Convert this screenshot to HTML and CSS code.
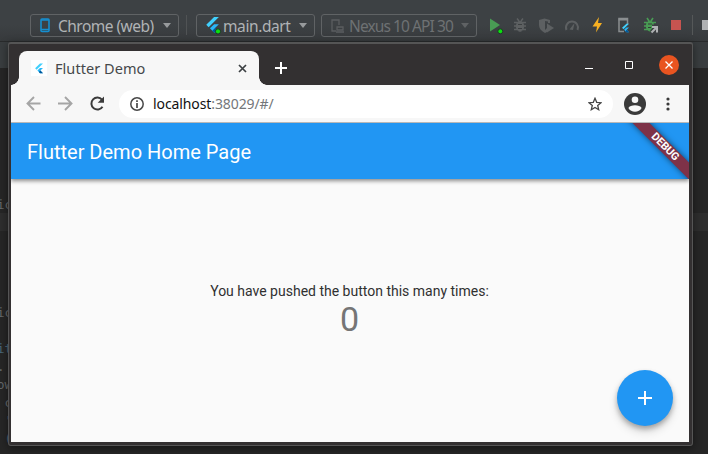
FILE: index.html
```html
<!DOCTYPE html>
<html lang="en">
<head>
<meta charset="utf-8">
<title>Flutter Demo</title>
<link rel="stylesheet" href="styles.css">
</head>
<body>
<svg class="defs" width="0" height="0">
  <symbol id="flutter" viewBox="0 0 16 20">
    <path d="M10 0h6L3.2 12.7l-3-3z" fill="#40d0fd"/>
    <path d="M10 9h6l-5.2 5.2L16 19.5h-6L4.8 14.2z" fill="#29b6f6"/>
    <path d="M7.8 17.2l3-3 5.2 5.3h-6z" fill="#01579b"/>
  </symbol>
</svg>
<div class="ide">
  <header class="tools">
    <div class="select device">
      <svg width="10" height="15" viewBox="0 0 10 15"><rect x="1" y="1" width="8" height="12.5" rx="1" fill="none" stroke="#168fd0" stroke-width="1.6"/><path d="M1 2h8M1 11.5h8" stroke="#168fd0" stroke-width="1.5"/></svg>
      <span class="label">Chrome (web)</span><i class="arrow"></i>
    </div>
    <i class="rule first"></i>
    <div class="select config">
      <svg width="16" height="18"><use href="#flutter" x="0" y="0" width="13" height="16"/><circle cx="12" cy="14.4" r="2.6" fill="#0be00f" stroke="#20352a"/></svg>
      <span class="label">main.dart</span><i class="arrow"></i>
    </div>
    <div class="select target">
      <svg width="13" height="14" fill="none" stroke="#5b5e60" stroke-width="1.3"><path d="M5 12H1V1h7v5"/><path d="M6 8h6v3H6zM5 13h8"/></svg>
      <span class="label">Nexus 10 API 30</span><i class="arrow"></i>
    </div>
    <svg class="actions" width="222" height="24" viewBox="486 13 222 24">
      <path d="M490 18.5v13l10-6.500z" fill="#499c54"/><circle cx="500.300" cy="31.300" r="2.500" fill="#0be00f" stroke="#20352a"/>
      <g stroke="#5d6062" fill="#5d6062"><ellipse cx="520" cy="26.300" rx="3.700" ry="5"/><path d="M514 22.500h12M514 26h12M514 29.500h12M517 18.500l2 2.500M523 18.500l-2 2.500" stroke-width="1.500" fill="none"/></g>
      <path d="M518 24.500h4M518 28.500h4" stroke="#3c3f41"/>
      <path d="M539 20l5.500-1.500L550 20v3h-2v-1.500l-3-.5v9l2-2v4l-2 1c-4-2-6-5-6-8z" fill="#5d6062"/><path d="M547 23.500v9l7-4.500z" fill="#5d6062"/>
      <path d="M566.500 30a6 6 0 1 1 11 0" fill="none" stroke="#5d6062" stroke-width="2"/><path d="M569.500 29.500l5-6.500-1.500 7z" fill="#5d6062"/>
      <path d="M599 17l-6.500 9.500h4.500l-1 6 6-9.500h-4z" fill="#f7b022"/>
      <path d="M624 31.500h-5v-13h8.500V24" fill="none" stroke="#8a8e90" stroke-width="1.500"/><path d="M618.500 19.500h9.500" stroke="#8a8e90" stroke-width="2"/><use href="#flutter" x="622" y="23" width="7" height="10"/>
      <g stroke="#499c54" fill="#499c54"><ellipse cx="650" cy="26" rx="3.700" ry="5"/><path d="M644 22.500h12M644 26h12M644 29.500h8M647 18l2 3M653 18l-2 3" stroke-width="1.600" fill="none"/></g>
      <path d="M648 24h4M648 27.500h3" stroke="#343a36"/>
      <path d="M651.500 32l5-5M652 26.500h5.500v5.500" fill="none" stroke="#3c3f41" stroke-width="4"/><path d="M651.500 32.500l5-5M652 27h5v5.500" fill="none" stroke="#afb1b3" stroke-width="2"/>
      <path d="M671 20h10v10h-10z" fill="#c75450"/><path d="M692.500 15v20" stroke="#555859"/><path d="M702 20h6v10h-6z" fill="#afb1b3"/>
    </svg>
  </header>
  <div class="tabs"></div>
  <main class="editor"><pre class="code">






<b>ic</b>





<b>ic</b>

<u>it</u>
<b>.</b>
<b>ow</b>
<b> c</b>
<b> '</b>
<u> (</u></pre></main>
</div>

<section class="window">
  <div class="titlebar">
    <div class="tab">
      <span class="favicon"><svg width="8" height="11"><use href="#flutter" width="8" height="11"/></svg></span>
      <span class="tabtitle">Flutter Demo</span>
      <svg width="9" height="9" viewBox="0 0 9 9"><path d="M1 1l7 7M8 1L1 8" stroke="#3c4043" stroke-width="1.700"/></svg>
    </div>
    <svg class="new" width="12" height="12"><path d="M6 0v12M0 6h12" stroke="#fff" stroke-width="2"/></svg>
    <div class="controls">
      <svg width="8" height="8"><path d="M0 7.500h8" stroke="#fff"/></svg>
      <svg width="8" height="8"><path d="M.5.5h7v7h-7z" fill="none" stroke="#fff"/></svg>
      <span class="close"><svg width="8" height="8"><path d="M.5.5l7 7M7.500.5l-7 7" stroke="#fff" stroke-width="1.300"/></svg></span>
    </div>
  </div>
  <div class="navbar">
    <svg class="arrows" width="80" height="16" viewBox="0 0 80 16" fill="none" stroke="#a5a5a5" stroke-width="1.900"><path d="M14.500 7.500H2M8 1L1.500 7.500 8 14M32 7.500h13M39 1l6.500 6.500L39 14"/><path d="M76.500 10.700A6 6 0 1 1 76 3.700" stroke="#3b3b3b" stroke-width="2"/><path d="M78 .5v6.300h-6.300z" fill="#3b3b3b" stroke="none"/></svg>
    <div class="address">
      <svg width="14" height="14" viewBox="0 0 14 14"><circle cx="7" cy="7" r="6.200" fill="none" stroke="#484848" stroke-width="1.500"/><path d="M7 6v5M7 3.200v1.700" stroke="#484848" stroke-width="1.700"/></svg>
      <span class="url">localhost<em>:38029/#/</em></span>
      <svg class="star" width="14" height="14" viewBox="0 0 14 14"><path d="M7 1.300l1.700 4 4.300.4-3.300 2.800 1 4.200L7 10.500l-3.700 2.200 1-4.200L1 5.700l4.300-.4z" fill="none" stroke="#444" stroke-width="1.300"/></svg>
    </div>
    <svg class="person" width="22" height="22" viewBox="0 0 22 22"><circle cx="11" cy="11" r="11" fill="#3a3a3a"/><circle cx="11" cy="6.700" r="3.300" fill="#f7f7f7"/><path d="M4.400 15c1.500-3.700 11.700-3.700 13.200 0-2.500 5-10.700 5-13.200 0z" fill="#f7f7f7"/></svg>
    <svg width="4" height="14" fill="#3a3a3a"><circle cx="2" cy="2" r="1.600"/><circle cx="2" cy="7" r="1.600"/><circle cx="2" cy="12" r="1.600"/></svg>
  </div>
  <div class="app">
    <header class="appbar"><h1>Flutter Demo Home Page</h1><div class="corner"><div class="debug">DEBUG</div></div></header>
    <div class="content"><p>You have pushed the button this many times:</p><strong>0</strong></div>
    <button class="fab"><svg width="14" height="14"><path d="M7 0v14M0 7h14" stroke="#fff" stroke-width="2"/></svg></button>
  </div>
</section>
</body>
</html>
```
FILE: styles.css
```css
* { box-sizing: border-box; }
body { margin: 0; width: 708px; height: 454px; overflow: hidden; position: relative; background: #262626; }
svg { display: block; flex: none; }
.defs { position: absolute; }
.ide { height: 454px; display: flex; flex-direction: column; font-family: "Noto Sans", sans-serif; }
.tools { height: 42px; flex: none; display: flex; align-items: flex-start; padding: 13px 0 0 30px; background: linear-gradient(#3d4144 60%, #373a3c); border-bottom: 1px solid #292b2c; }
.select { height: 23px; margin-top: 1px; border: 1px solid #606365; border-radius: 3px; display: flex; align-items: center; color: #b0b3b5; font-size: 15.500px; line-height: 20px; white-space: nowrap; }
.label { flex: none; padding-top: 1px; }
.device { width: 149px; padding: 0 7px 0 9px; }
.device .label { margin-left: 8px; letter-spacing: -.53px; }
.config { width: 119px; padding: 0 7px 0 9px; }
.config .label { margin-left: 1px; letter-spacing: -.4px; }
.target { width: 156px; margin-left: 6px; padding: 0 7px 0 9px; color: #6e7173; }
.target .label { margin-left: 5px; letter-spacing: -.9px; }
.arrow { margin-left: auto; border: 4.500px solid transparent; border-top: 5px solid #989b9d; border-bottom: 0; }
.target .arrow { border-top-color: #5f6264; }
.rule { width: 1px; height: 20px; background: #505355; margin: 2px 9px 0 7px; }
.actions { margin-left: 9px; }
.tabs { height: 26px; flex: none; background: #393d3f; }
.editor { flex: 1; background: linear-gradient(transparent 145px, #2e2e2e 145px, #2e2e2e 163px, transparent 163px), #262626; }
.code { margin: 0; padding-top: 20px; font: 12.500px/18px "DejaVu Sans Mono", monospace; color: #65696b; margin-left: -3px; }
.code b, .code u { font-weight: 400; text-decoration: none; }
.code u { color: #496779; }

.window { position: absolute; left: 8px; top: 42px; width: 685px; height: 404px; background: #333031; border: 1px solid #555; border-top: 2px solid #555; border-radius: 3px; padding: 0 3px 3px 2px; box-shadow: 0 2px 9px #0007; }
.titlebar { height: 41px; display: flex; align-items: flex-end; padding-left: 8px; background: #333031; position: relative; }
.tab { position: relative; width: 240px; height: 34px; border-radius: 8px 8px 0 0; background: #f7f7f7; display: flex; align-items: center; padding: 0 12px; }
.tab::before, .tab::after { content: ""; position: absolute; bottom: 0; width: 8px; height: 8px; }
.tab::before { left: -8px; background: radial-gradient(circle at 0 0, transparent 7.500px, #f7f7f7 8px); }
.tab::after { right: -8px; background: radial-gradient(circle at 100% 0, transparent 7.500px, #f7f7f7 8px); }
.favicon { width: 16px; height: 16px; background: #fff; display: grid; place-items: center; }
.tabtitle { flex: 1; margin-left: 8px; font: 14.500px/20px "Noto Sans", sans-serif; letter-spacing: .05px; color: #45484a; }
.new { margin: 0 0 11px 16px; }
.controls { flex: 1; display: flex; align-items: center; justify-content: flex-end; gap: 32px; padding-right: 10px; height: 41px; }
.close { width: 20px; height: 20px; border-radius: 50%; background: #e95420; display: grid; place-items: center; margin-left: -6px; }
.navbar { height: 38px; background: #f7f7f7; border-bottom: 1px solid #b8b8b8; display: flex; align-items: center; padding: 0 19px 0 15px; }
.address { width: 494px; height: 28px; margin: 0 11px 0 13px; border-radius: 14px; background: #fff; display: flex; align-items: center; padding: 0 11px; }
.url { margin-left: 9px; font: 14px/20px "Noto Sans", sans-serif; letter-spacing: -.1px; color: #111; }
.url em { font-style: normal; color: #74777a; }
.star { margin-left: auto; }
.person { margin-right: 20px; }
.app { position: relative; width: 678px; height: 319px; background: #fafafa; display: flex; flex-direction: column; overflow: hidden; font-family: Roboto, sans-serif; }
.appbar { height: 56px; flex: none; background: #2196f3; box-shadow: 0 2px 4px #0005, 0 1px 5px #0003; display: flex; align-items: center; padding: 2px 0 0 16px; position: relative; }
h1 { margin: 0; color: #fff; font-size: 20px; line-height: 24px; font-weight: 400; letter-spacing: 0; }
.corner { position: absolute; right: 0; top: 0; width: 76px; height: 56px; overflow: hidden; }
.debug { position: absolute; left: 2px; top: 18px; width: 100px; height: 12px; transform: rotate(45deg); background: #7e3248; box-shadow: 0 0 6px #0008; color: #fff; font: 700 10.800px/12px Roboto, sans-serif; text-align: center; }
.content { flex: 1; display: flex; flex-direction: column; align-items: center; justify-content: center; padding-right: 1px; }
p { margin: 0; font-size: 14px; line-height: 16px; color: #303030; }
strong { font-size: 34px; line-height: 40px; font-weight: 400; color: #757575; }
.fab { position: absolute; right: 16px; bottom: 16px; width: 56px; height: 56px; border: 0; border-radius: 50%; background: #2196f3; display: grid; place-items: center; box-shadow: 0 3px 5px #0004, 0 6px 10px #0002; }
```
